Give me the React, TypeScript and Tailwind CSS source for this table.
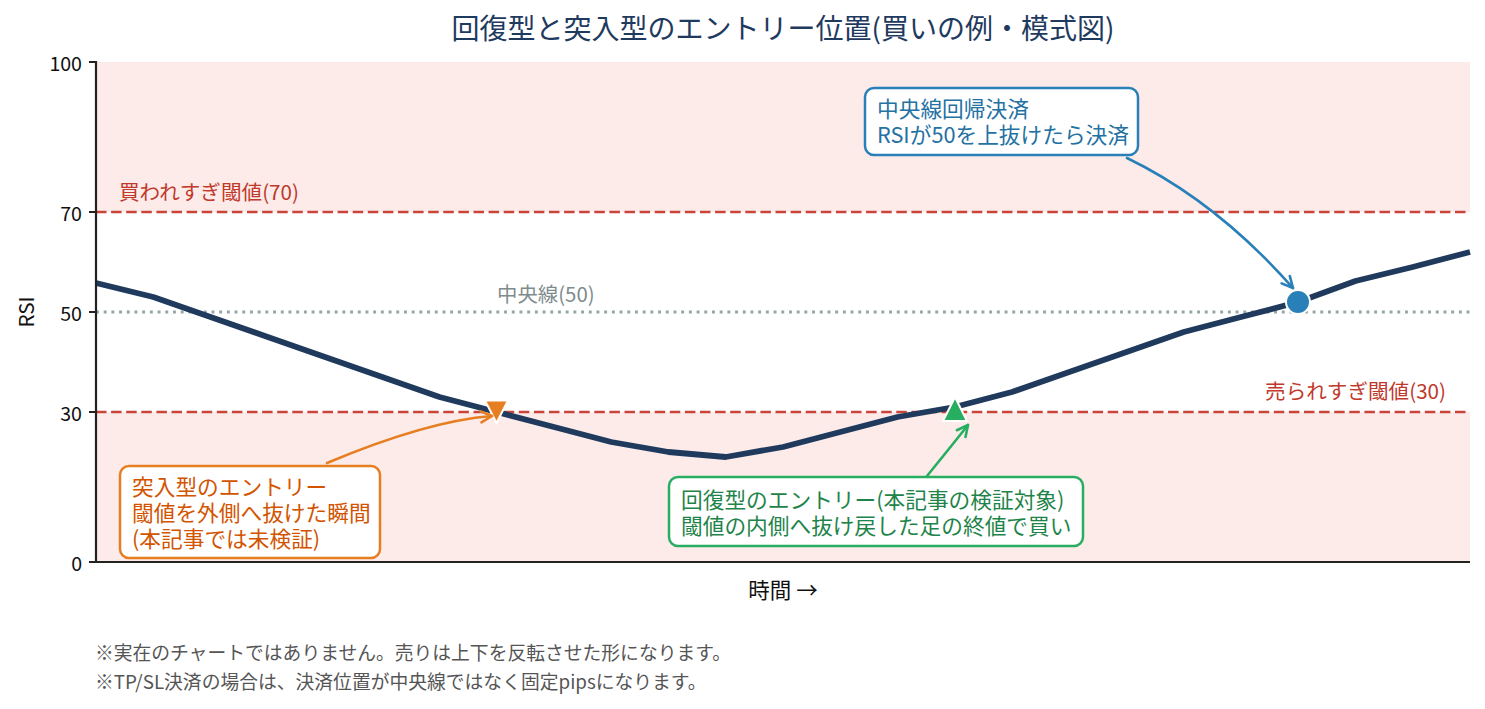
const FONT = "'Noto Sans CJK JP', 'Noto Sans', sans-serif";

// plot frame (page px): x 96..1470, RSI 0..100 -> y 562..62
const X0 = 96;
const X1 = 1470;
const yOf = (v: number) => 562 - v * 5;

const RSI_Y = [
  283, 297, 317, 337, 357, 377, 397, 412, 427, 442, 452, 457, 447, 432, 417, 407, 392, 372,
  352, 332, 317, 302, 281, 267, 252,
];
const LINE_PTS = RSI_Y.map((y, i) => `${(X0 + i * 57.25).toFixed(2)},${y}`).join(" ");

const TICKS = [100, 70, 50, 30, 0];

/** open "->" head at end point (ex,ey), oriented from the curve's control point */
function headPath(ex: number, ey: number, cx: number, cy: number, len = 11, hw = 5.5) {
  const dx = ex - cx;
  const dy = ey - cy;
  const d = Math.hypot(dx, dy);
  const ux = dx / d;
  const uy = dy / d;
  const bx = ex - ux * len;
  const by = ey - uy * len;
  return `M${bx - uy * hw},${by + ux * hw} L${ex},${ey} L${bx + uy * hw},${by - ux * hw}`;
}

function Arrow({
  s,
  c,
  e,
  color,
}: {
  s: [number, number];
  c: [number, number];
  e: [number, number];
  color: string;
}) {
  return (
    <g fill="none" stroke={color} strokeWidth={2.6} strokeLinecap="round" strokeLinejoin="round">
      <path d={`M${s[0]},${s[1]} Q${c[0]},${c[1]} ${e[0]},${e[1]}`} />
      <path d={headPath(e[0], e[1], c[0], c[1])} />
    </g>
  );
}

function Callout({
  x,
  y,
  w,
  h,
  border,
  color,
  lines,
  lineY,
}: {
  x: number;
  y: number;
  w: number;
  h: number;
  border: string;
  color: string;
  lines: string[];
  lineY: number[];
}) {
  return (
    <g>
      <rect x={x} y={y} width={w} height={h} rx={9} fill="#fff" stroke={border} strokeWidth={2.5} />
      {lines.map((t, i) => (
        <text key={t} x={x + 12} y={lineY[i]} fill={color} fontSize={21.7} dominantBaseline="central">
          {t}
        </text>
      ))}
    </g>
  );
}

function Chart() {
  return (
    <svg
      width={1485}
      height={565}
      viewBox="0 45 1485 565"
      className="block"
      style={{ fontFamily: FONT }}
    >
      {/* overbought / oversold zones */}
      <rect x={X0} y={yOf(100)} width={X1 - X0} height={150} fill="#fdebea" />
      <rect x={X0} y={yOf(30)} width={X1 - X0} height={150} fill="#fdebea" />

      <line x1={X0} x2={X1} y1={yOf(70)} y2={yOf(70)} stroke="#c9443a" strokeWidth={2.4} strokeDasharray="10.5 4.6" />
      <line x1={X0} x2={X1} y1={yOf(30)} y2={yOf(30)} stroke="#c9443a" strokeWidth={2.4} strokeDasharray="10.5 4.6" />
      <line x1={X0} x2={X1} y1={yOf(50)} y2={yOf(50)} stroke="#95a5a6" strokeWidth={2.8} strokeDasharray="2.9 4.8" />

      <text x={119} y={191} fill="#c0392b" fontSize={20.6} dominantBaseline="central">
        買われすぎ閾値(70)
      </text>
      <text x={1446} y={390} fill="#c0392b" fontSize={20.6} textAnchor="end" dominantBaseline="central">
        売られすぎ閾値(30)
      </text>
      <text x={497} y={293} fill="#7f8c8d" fontSize={20.4} dominantBaseline="central">
        中央線(50)
      </text>

      <polyline points={LINE_PTS} fill="none" stroke="#1f3a5c" strokeWidth={5.8} strokeLinejoin="round" />

      {/* spines + y ticks */}
      <line x1={X0} x2={X0} y1={61} y2={563} stroke="#222" strokeWidth={2.2} />
      <line x1={X0 - 1} x2={X1} y1={562} y2={562} stroke="#222" strokeWidth={2.2} />
      {TICKS.map((v) => (
        <g key={v}>
          <line x1={89} x2={X0} y1={yOf(v)} y2={yOf(v)} stroke="#222" strokeWidth={2} />
          <text x={82} y={yOf(v)} fontSize={19.6} fill="#111" textAnchor="end" dominantBaseline="central">
            {v}
          </text>
        </g>
      ))}
      <text
        x={25}
        y={312}
        fontSize={20.6}
        fill="#111"
        textAnchor="middle"
        dominantBaseline="central"
        transform="rotate(-90 25 312)"
      >
        RSI
      </text>
      <text x={783} y={588} fontSize={21.5} fill="#111" textAnchor="middle" dominantBaseline="central">
        時間 →
      </text>

      {/* entry / exit markers */}
      <polygon points="485,400.5 508,400.5 496.5,423" fill="#e67e22" stroke="#fff" strokeWidth={2} />
      <polygon points="943,421 967,421 955,397" fill="#27ae60" stroke="#fff" strokeWidth={2} />
      <circle cx={1298} cy={302} r={12} fill="#2980b9" stroke="#fff" strokeWidth={2} />

      <Arrow s={[327, 463]} c={[427, 421]} e={[492, 416]} color="#e67e22" />
      <Arrow s={[927, 476]} c={[953, 444]} e={[968, 425]} color="#27ae60" />
      <Arrow s={[1127, 158]} c={[1216, 201]} e={[1293, 288]} color="#2980b9" />

      <Callout
        x={120}
        y={466}
        w={260}
        h={92}
        border="#e67e22"
        color="#d35400"
        lines={["突入型のエントリー", "閾値を外側へ抜けた瞬間", "(本記事では未検証)"]}
        lineY={[485, 511, 537]}
      />
      <Callout
        x={669}
        y={477}
        w={414}
        h={69}
        border="#27ae60"
        color="#1e8449"
        lines={["回復型のエントリー(本記事の検証対象)", "閾値の内側へ抜け戻した足の終値で買い"]}
        lineY={[498, 524]}
      />
      <Callout
        x={865}
        y={88}
        w={273}
        h={67}
        border="#2980b9"
        color="#2471a3"
        lines={["中央線回帰決済", "RSIが50を上抜けたら決済"]}
        lineY={[107, 133]}
      />
    </svg>
  );
}

export default function App() {
  return (
    <div className="h-[709px] w-[1485px] overflow-hidden bg-white font-['Noto_Sans_CJK_JP','Noto_Sans',sans-serif]">
      <div className="ml-[96px] flex h-[45px] w-[1374px] items-center justify-center pt-[9px] text-[28px] leading-none text-[#1f3a5f]">
        回復型と突入型のエントリー位置(買いの例・模式図)
      </div>
      <Chart />
      <div className="pl-[95px] pt-[27px] text-[18.8px] leading-[29px] text-[#555]">
        <p>※実在のチャートではありません。売りは上下を反転させた形になります。</p>
        <p>※TP/SL決済の場合は、決済位置が中央線ではなく固定pipsになります。</p>
      </div>
    </div>
  );
}
